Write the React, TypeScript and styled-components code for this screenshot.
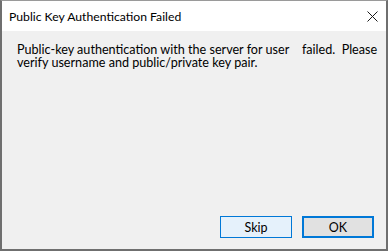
import styled, { createGlobalStyle } from 'styled-components';

const GlobalStyle = createGlobalStyle`
  html, body {
    margin: 0;
    padding: 0;
    background: #f0f0f0;
  }

  body {
    font-family: Lato, "Liberation Sans", Arial, sans-serif;
    font-size: 12px;
    color: #000;
  }
`;

const Window = styled.div`
  box-sizing: border-box;
  width: 388px;
  height: 251px;
  display: flex;
  flex-direction: column;
  border-top: 1px solid #9a9a9a;
  border-left: 2px solid #6f6f6f;
  border-right: 2px solid #6f6f6f;
  border-bottom: 2px solid #6f6f6f;
  background: #f0f0f0;
`;

const TitleBar = styled.div`
  height: 30px;
  display: flex;
  align-items: center;
  justify-content: space-between;
  background: #fff;
  padding: 0 0 0 7px;
`;

const Title = styled.span`
  font-size: 12.2px;
  padding-top: 1px;
`;

const CloseButton = styled.button`
  width: 28px;
  height: 30px;
  display: flex;
  align-items: center;
  justify-content: center;
  border: none;
  background: transparent;
  padding: 0;
`;

const Body = styled.div`
  flex: 1;
  padding: 12px 0 0 15px;
`;

const Message = styled.p`
  margin: 0;
  font-size: 12.6px;
  line-height: 13px;
  white-space: pre;
`;

const Footer = styled.div`
  display: flex;
  justify-content: flex-end;
  gap: 10px;
  padding: 0 12px 11px 0;
`;

const Button = styled.button<{ $default?: boolean }>`
  box-sizing: border-box;
  width: 72px;
  height: 22px;
  font-family: inherit;
  font-size: 12.5px;
  color: #000;
  padding: 0;
  border: ${p => (p.$default ? '2px' : '1px')} solid #0078d7;
  background: ${p => (p.$default ? '#e1e1e1' : '#e5f1fb')};
`;

export default function App() {
  return (
    <>
      <GlobalStyle />
      <Window>
        <TitleBar>
          <Title>Public Key Authentication Failed</Title>
          <CloseButton aria-label="Close">
            <svg width="11" height="11" viewBox="0 0 11 11">
              <path d="M0.5 0.5 L10.5 10.5 M10.5 0.5 L0.5 10.5" stroke="#1a1a1a" strokeWidth="1" />
            </svg>
          </CloseButton>
        </TitleBar>
        <Body>
          <Message>
            {'Public-key authentication with the server for user    failed.  Please\nverify username and public/private key pair.'}
          </Message>
        </Body>
        <Footer>
          <Button>Skip</Button>
          <Button $default>OK</Button>
        </Footer>
      </Window>
    </>
  );
}
